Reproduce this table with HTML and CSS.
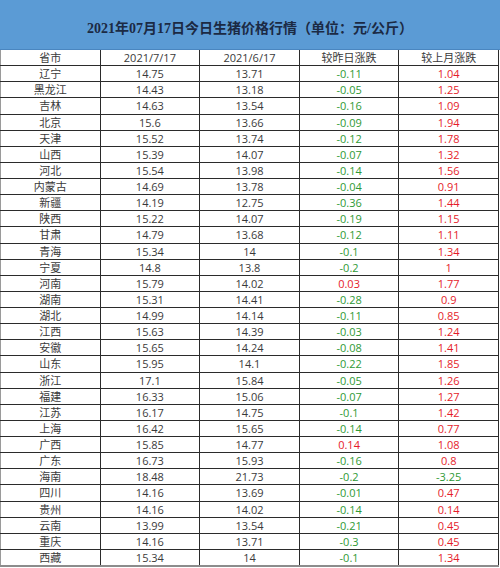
FILE: index.html
```html
<!DOCTYPE html>
<html lang="zh-CN">
<head>
<meta charset="utf-8">
<link rel="stylesheet" href="styles.css">
</head>
<body>
<div class="sheet">
  <div class="title">2021年07月17日今日生猪价格行情（单位：元/公斤）</div>
  <table class="grid">
    <thead>
      <tr><th>省市</th><th>2021/7/17</th><th>2021/6/17</th><th>较昨日涨跌</th><th>较上月涨跌</th></tr>
    </thead>
    <tbody>
      <tr><td>辽宁</td><td>14.75</td><td>13.71</td><td class="dn">-0.11</td><td class="up">1.04</td></tr>
      <tr><td>黑龙江</td><td>14.43</td><td>13.18</td><td class="dn">-0.05</td><td class="up">1.25</td></tr>
      <tr><td>吉林</td><td>14.63</td><td>13.54</td><td class="dn">-0.16</td><td class="up">1.09</td></tr>
      <tr><td>北京</td><td>15.6</td><td>13.66</td><td class="dn">-0.09</td><td class="up">1.94</td></tr>
      <tr><td>天津</td><td>15.52</td><td>13.74</td><td class="dn">-0.12</td><td class="up">1.78</td></tr>
      <tr><td>山西</td><td>15.39</td><td>14.07</td><td class="dn">-0.07</td><td class="up">1.32</td></tr>
      <tr><td>河北</td><td>15.54</td><td>13.98</td><td class="dn">-0.14</td><td class="up">1.56</td></tr>
      <tr><td>内蒙古</td><td>14.69</td><td>13.78</td><td class="dn">-0.04</td><td class="up">0.91</td></tr>
      <tr><td>新疆</td><td>14.19</td><td>12.75</td><td class="dn">-0.36</td><td class="up">1.44</td></tr>
      <tr><td>陕西</td><td>15.22</td><td>14.07</td><td class="dn">-0.19</td><td class="up">1.15</td></tr>
      <tr><td>甘肃</td><td>14.79</td><td>13.68</td><td class="dn">-0.12</td><td class="up">1.11</td></tr>
      <tr><td>青海</td><td>15.34</td><td>14</td><td class="dn">-0.1</td><td class="up">1.34</td></tr>
      <tr><td>宁夏</td><td>14.8</td><td>13.8</td><td class="dn">-0.2</td><td class="up">1</td></tr>
      <tr><td>河南</td><td>15.79</td><td>14.02</td><td class="up">0.03</td><td class="up">1.77</td></tr>
      <tr><td>湖南</td><td>15.31</td><td>14.41</td><td class="dn">-0.28</td><td class="up">0.9</td></tr>
      <tr><td>湖北</td><td>14.99</td><td>14.14</td><td class="dn">-0.11</td><td class="up">0.85</td></tr>
      <tr><td>江西</td><td>15.63</td><td>14.39</td><td class="dn">-0.03</td><td class="up">1.24</td></tr>
      <tr><td>安徽</td><td>15.65</td><td>14.24</td><td class="dn">-0.08</td><td class="up">1.41</td></tr>
      <tr><td>山东</td><td>15.95</td><td>14.1</td><td class="dn">-0.22</td><td class="up">1.85</td></tr>
      <tr><td>浙江</td><td>17.1</td><td>15.84</td><td class="dn">-0.05</td><td class="up">1.26</td></tr>
      <tr><td>福建</td><td>16.33</td><td>15.06</td><td class="dn">-0.07</td><td class="up">1.27</td></tr>
      <tr><td>江苏</td><td>16.17</td><td>14.75</td><td class="dn">-0.1</td><td class="up">1.42</td></tr>
      <tr><td>上海</td><td>16.42</td><td>15.65</td><td class="dn">-0.14</td><td class="up">0.77</td></tr>
      <tr><td>广西</td><td>15.85</td><td>14.77</td><td class="up">0.14</td><td class="up">1.08</td></tr>
      <tr><td>广东</td><td>16.73</td><td>15.93</td><td class="dn">-0.16</td><td class="up">0.8</td></tr>
      <tr><td>海南</td><td>18.48</td><td>21.73</td><td class="dn">-0.2</td><td class="dn">-3.25</td></tr>
      <tr><td>四川</td><td>14.16</td><td>13.69</td><td class="dn">-0.01</td><td class="up">0.47</td></tr>
      <tr><td>贵州</td><td>14.16</td><td>14.02</td><td class="dn">-0.14</td><td class="up">0.14</td></tr>
      <tr><td>云南</td><td>13.99</td><td>13.54</td><td class="dn">-0.21</td><td class="up">0.45</td></tr>
      <tr><td>重庆</td><td>14.16</td><td>13.71</td><td class="dn">-0.3</td><td class="up">0.45</td></tr>
      <tr><td>西藏</td><td>15.34</td><td>14</td><td class="dn">-0.1</td><td class="up">1.34</td></tr>
    </tbody>
  </table>
</div>
</body>
</html>
```

FILE: styles.css
```css
html, body {
  margin: 0;
  padding: 0;
  background: #ffffff;
}

.sheet {
  width: 500px;
  height: 568px;
  overflow: hidden;
  background: #ffffff;
}

.title {
  height: 50px;
  box-sizing: border-box;
  background: #5b9bd5;
  border-bottom: 1px solid #4a86c0;
  display: flex;
  align-items: center;
  justify-content: center;
  padding-top: 5px;
  font-family: "Liberation Serif", "Noto Sans CJK SC", serif;
  font-size: 14px;
  font-weight: bold;
  color: #1b2a44;
}

.grid {
  width: 499px;
  border-collapse: collapse;
  table-layout: fixed;
  font-family: "Open Sans", "Noto Sans CJK SC", sans-serif;
  font-size: 11px;
  color: #3a3a3a;
}

.grid th,
.grid td {
  height: 15.125px;
  padding: 0;
  text-align: center;
  vertical-align: middle;
  border: 1px solid #2b2b2b;
  font-weight: normal;
  line-height: 15px;
  white-space: nowrap;
}

.grid th {
  border-top: none;
}

.grid tr > :first-child {
  border-left: 1px solid #9a9a9a;
}

.grid tbody tr:last-child td {
  border-bottom: 2px solid #8c8c8c;
}

.grid .dn {
  color: #2f9a35;
}

.grid .up {
  color: #e51c2a;
}
```
